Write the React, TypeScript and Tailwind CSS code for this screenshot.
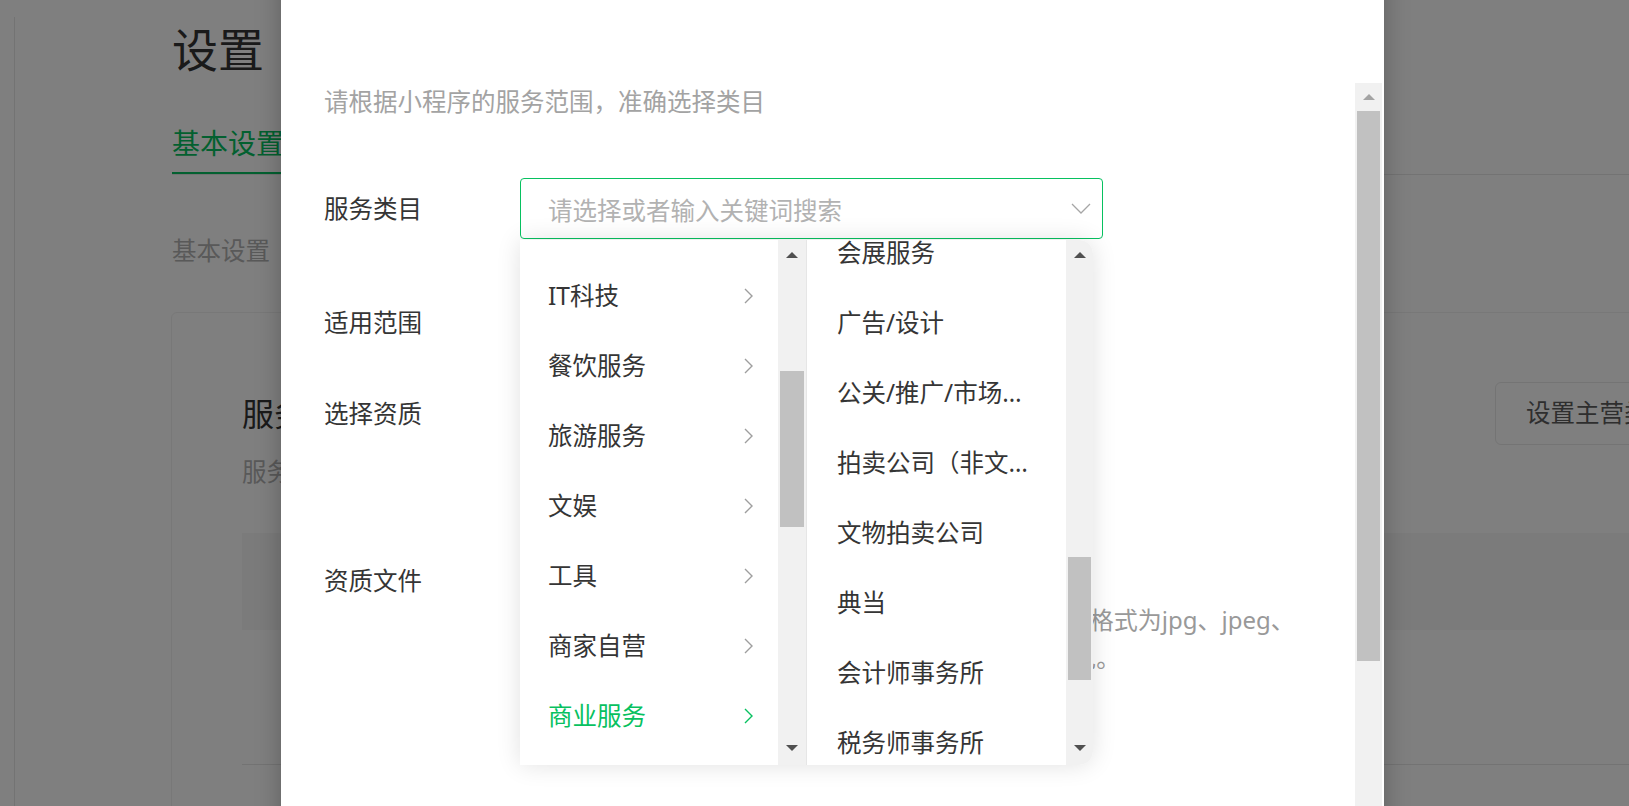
// Category lists for the cascading picker. The left list holds top-level
// categories, the right one the sub-categories of the selected entry.
const TOP_LEVEL = ['教育服务', 'IT科技', '餐饮服务', '旅游服务', '文娱', '工具', '商家自营', '商业服务', '快递业与邮政']
const SELECTED = '商业服务'
const SUB_LEVEL = [
  '法律服务',
  '会展服务',
  '广告/设计',
  '公关/推广/市场营销',
  '拍卖公司（非文物）',
  '文物拍卖公司',
  '典当',
  '会计师事务所',
  '税务师事务所',
  '人力资源服务',
]

function ArrowRight({ className }: { className?: string }) {
  return (
    <svg className={className} width="9" height="16" viewBox="0 0 9 16" fill="none">
      <path d="M1 1l7 7-7 7" stroke="currentColor" strokeWidth={1.4} />
    </svg>
  )
}

function ArrowDown({ className }: { className?: string }) {
  return (
    <svg className={className} width="20" height="11" viewBox="0 0 20 11" fill="none">
      <path d="M1 1l9 9 9-9" stroke="currentColor" strokeWidth={1.3} />
    </svg>
  )
}

// Classic windows-style scrollbar with arrow buttons and a thumb
function Scrollbar({
  thumb,
  width,
  upClass,
  downClass,
  upArrow,
  downArrow,
}: {
  thumb: string
  width: string
  upClass: string
  downClass: string
  upArrow: string
  downArrow: string
}) {
  return (
    <div className={`flex shrink-0 flex-col bg-[#f1f1f1] ${width}`}>
      <div className={`flex shrink-0 items-center justify-center ${upClass}`}>
        <div className={`h-0 w-0 border-x-[6px] border-b-[6px] border-x-transparent ${upArrow}`} />
      </div>
      <div className={`mx-[2px] shrink-0 bg-[#c1c1c1] ${thumb}`} />
      <div className="flex-1" />
      <div className={`flex shrink-0 items-center justify-center ${downClass}`}>
        <div className={`h-0 w-0 border-x-[6px] border-t-[6px] border-x-transparent ${downArrow}`} />
      </div>
    </div>
  )
}

function CategoryMenu() {
  return (
    <div className="absolute left-0 top-full z-10 mt-px flex h-[525px] overflow-hidden rounded-r-[14px] bg-white shadow-[0_0_24px_rgba(0,0,0,0.12)]">
      {/* top level */}
      <div className="w-[258px] overflow-hidden">
        <ul className="-mt-[49px]">
          {TOP_LEVEL.map((name) => {
            const active = name === SELECTED
            return (
              <li
                key={name}
                className={`flex h-[70px] items-center justify-between pl-[28px] pr-[25px] text-[24.5px] ${
                  active ? 'text-[#07c160]' : 'text-[#353535]'
                }`}
              >
                <span>{name}</span>
                <ArrowRight className={active ? 'text-[#07c160]' : 'text-[#9e9e9e]'} />
              </li>
            )
          })}
        </ul>
      </div>
      <Scrollbar
        width="w-[28px]"
        thumb="mt-[101px] h-[156px]"
        upClass="h-[30px]"
        downClass="h-[34px]"
        upArrow="border-b-[#505050]"
        downArrow="border-t-[#505050]"
      />

      {/* sub level */}
      <div className="w-[260px] overflow-hidden border-l border-[#e6e6e6]">
        <ul className="-mt-[92px]">
          {SUB_LEVEL.map((name) => (
            <li key={name} className="flex h-[70px] items-center pl-[30px] pr-[36px] text-[24.5px] text-[#353535]">
              <span className="truncate">{name}</span>
            </li>
          ))}
        </ul>
      </div>
      <Scrollbar
        width="w-[27px]"
        thumb="mt-[287px] h-[123px]"
        upClass="h-[30px]"
        downClass="h-[34px]"
        upArrow="border-b-[#505050]"
        downArrow="border-t-[#505050]"
      />
    </div>
  )
}

function CategoryDialog() {
  return (
    <div className="absolute left-[281px] top-[-60px] h-[900px] w-[1103px] bg-white shadow-[0_0_24px_rgba(0,0,0,0.25)]">
      <div className="pb-[84px] pl-[43px] pt-[29px]">
        <h2 className="text-[30px] leading-[30px] text-[#353535]">选择类目</h2>
      </div>

      <div className="flex h-[787px]">
        <div className="flex-1 pl-[43px]">
          <p className="text-[24.5px] leading-[38px] text-[#a3a3a3]">请根据小程序的服务范围，准确选择类目</p>

          <div className="mt-[57px] flex">
            <div className="w-[196px] shrink-0 text-[24.5px] leading-[61px] text-[#353535]">服务类目</div>
            <div className="relative">
              <div className="flex h-[61px] w-[583px] items-center justify-between rounded-[4px] border border-[#07c160] pl-[27px] pr-[11px]">
                <span className="mt-[5px] text-[24.5px] text-[#b2b2b2]">请选择或者输入关键词搜索</span>
                <ArrowDown className="text-[#a6a6a6]" />
              </div>
              <CategoryMenu />
            </div>
          </div>

          <div className="mt-[66px] flex">
            <div className="w-[196px] shrink-0 text-[24.5px] leading-[36px] text-[#353535]">适用范围</div>
          </div>

          <div className="mt-[55px] flex">
            <div className="w-[196px] shrink-0 text-[24.5px] leading-[36px] text-[#353535]">选择资质</div>
          </div>

          <div className="mt-[131px] flex">
            <div className="w-[196px] shrink-0 text-[24.5px] leading-[36px] text-[#353535]">资质文件</div>
            <p className="whitespace-nowrap pt-[38px] text-[24px] leading-[38px] text-[#999999]">
              请上传相关资质证明文件，单个文件大小不超过 5M，格式为jpg、jpeg、
              <br />
              png、bmp格式的图片，需保证图片内容清晰完整可见。
            </p>
          </div>
        </div>

        <div className="mr-[2px]">
          <Scrollbar
            width="w-[27px] h-full"
            thumb="h-[550px]"
            upClass="h-[28px]"
            downClass="h-[28px]"
            upArrow="border-b-[#a3a3a3]"
            downArrow="border-t-[#a3a3a3]"
          />
        </div>
      </div>
    </div>
  )
}

// Settings page lying under the dialog
function SettingsPage() {
  return (
    <div className="flex h-full">
      <div className="mt-[17px] w-[15px] shrink-0 border-r border-[#e7e7e7]" />
      <main className="flex-1 pl-[157px]">
        <h1 className="mt-[18px] text-[46px] leading-[63px] text-[#353535]">设置</h1>

        <div className="mt-[44px] flex border-b border-[#e7e7e7]">
          <div className="border-b-2 border-[#07c160] pb-[11px] text-[28px] leading-[36px] text-[#07c160]">
            基本设置
          </div>
        </div>

        <div className="mt-[58px] text-[24.5px] leading-[36px] text-[#b2b2b2]">基本设置</div>

        <section className="-ml-px mt-[43px] h-[600px] w-[1577px] rounded-[6px] border border-[#f0f0f0] pl-[70px] pr-[43px] pt-[69px]">
          <div className="flex items-start justify-between">
            <div>
              <h3 className="text-[32px] leading-[63px] text-[#353535]">服务类目</h3>
              <p className="mt-[9px] text-[24.5px] leading-[36px] text-[#b2b2b2]">服务类目决定了小程序可提供的服务范围</p>
            </div>
            <button className="h-[63px] rounded-[6px] border border-[#e8e8e8] bg-white px-[30px] text-[24.5px] text-[#5c5c5c]">
              设置主营类目
            </button>
          </div>
          <div className="mt-[43px] h-[97px] bg-[#f7f7f7]" />
          <div className="mt-[134px] border-t border-[#e7e7e7]" />
        </section>
      </main>
    </div>
  )
}

export default function App() {
  return (
    <div className="relative h-screen w-full overflow-hidden bg-white font-['Noto_Sans','Noto_Sans_CJK_SC',sans-serif]">
      <SettingsPage />
      <div className="absolute inset-0 bg-black/50" />
      <CategoryDialog />
    </div>
  )
}
